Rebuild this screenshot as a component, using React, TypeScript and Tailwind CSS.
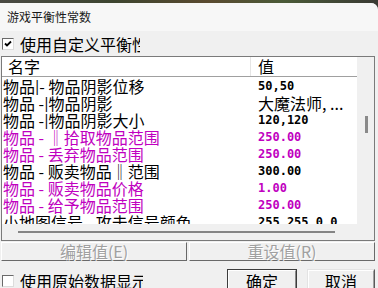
import React from "react";

const rows: { name: string; value: string; magenta?: boolean; cjkValue?: boolean }[] = [
  { name: "物品|- 物品阴影位移", value: "50,50" },
  { name: "物品 -|物品阴影", value: "大魔法师, ...", cjkValue: true },
  { name: "物品 -|物品阴影大小", value: "120,120" },
  { name: "物品 - ‖拾取物品范围", value: "250.00", magenta: true },
  { name: "物品 - 丢弃物品范围", value: "250.00", magenta: true },
  { name: "物品 - 贩卖物品‖范围", value: "300.00" },
  { name: "物品 - 贩卖物品价格", value: "1.00", magenta: true },
  { name: "物品 - 给予物品范围", value: "250.00", magenta: true },
  { name: "小地图信号 - 攻击信号颜色", value: "255,255,0,0" },
];

function CheckBox({ checked }: { checked?: boolean }) {
  return (
    <div className="w-[12px] h-[12px] shrink-0 bg-white border border-t-[#6a6a6a] border-l-[#6a6a6a] border-r-[#dcdcdc] border-b-[#dcdcdc] flex items-center justify-center">
      {checked && (
        <svg width="8" height="8" viewBox="0 0 8 8">
          <path d="M1 3.5 L3 5.5 L7 1.5" stroke="#000" strokeWidth="1.8" fill="none" />
        </svg>
      )}
    </div>
  );
}

export default function App() {
  return (
    <div className="w-[378px] h-[288px] overflow-hidden bg-[linear-gradient(90deg,#4a4a44,#3d4530_30%,#5a4a30_55%,#4a5a38_75%,#3a3a34)] font-['Noto_Sans_CJK_SC',sans-serif] text-black">
      <div className="mt-[3px] h-[285px] bg-[#f0f0f0] rounded-tr-[7px] flex flex-col overflow-hidden">
        {/* title bar */}
        <div className="h-[28px] shrink-0 bg-[#f7f7f7] flex items-center pl-[7px] text-[12px] leading-[14px] text-[#1a1a1a]">
          游戏平衡性常数
        </div>
        {/* top checkbox row */}
        <div className="h-[25px] shrink-0 flex items-center pl-[2px]">
          <CheckBox checked />
          <div className="ml-[6px] w-[120px] overflow-hidden whitespace-nowrap text-[16px] leading-[18px]">
            使用自定义平衡性
          </div>
        </div>
        {/* list */}
        <div className="ml-[1px] w-[374px] h-[185px] shrink-0 border border-[#7a7a7a] flex flex-col bg-[#f0f0f0]">
          <div className="h-[167px] flex">
            <div className="w-[355px] bg-white flex flex-col overflow-hidden">
              <div className="h-[20px] shrink-0 flex border-b border-[#a0a0a0] text-[16px] leading-[19px]">
                <div className="w-[249px] pl-[6px] border-r border-[#e5e5e5]">名字</div>
                <div className="pl-[7px]">值</div>
              </div>
              <div className="pt-[1px]">
                {rows.map((r, i) => (
                  <div
                    key={i}
                    className={`h-[17px] flex whitespace-nowrap ${r.magenta ? "text-[#c000c0]" : "text-black"}`}
                  >
                    <div className="w-[249px] pl-[1px] text-[16px] leading-[17px] overflow-hidden">{r.name}</div>
                    <div
                      className={
                        r.cjkValue
                          ? "pl-[7px] text-[16px] leading-[17px]"
                          : "pl-[7px] font-['DejaVu_Sans_Mono',monospace] font-bold text-[12px] leading-[17px]"
                      }
                    >
                      {r.value}
                    </div>
                  </div>
                ))}
              </div>
            </div>
            <div className="w-[17px] flex flex-col items-center pt-[59px] bg-[#f0f0f0]">
              <div className="w-[3px] h-[17px] bg-[#8a8a8a] ml-[1px]" />
            </div>
          </div>
          <div className="h-[16px] shrink-0 bg-[#f0f0f0] pt-[7px]">
            <div className="ml-[16px] w-[317px] h-[2px] bg-[#858585]" />
          </div>
        </div>
        {/* edit / reset buttons */}
        <div className="mt-[1px] ml-[1px] w-[374px] h-[19px] shrink-0 flex gap-[2px]">
          <div className="w-[186px] h-full border border-t-white border-l-white border-r-[#696969] border-b-[#696969] flex items-center justify-center text-[16px] leading-[17px] text-[#a0a0a0] [text-shadow:1px_1px_0_#fff]">
            编辑值(E)
          </div>
          <div className="flex-1 h-full border border-t-white border-l-white border-r-[#696969] border-b-[#696969] flex items-center justify-center text-[16px] leading-[17px] text-[#a0a0a0] [text-shadow:1px_1px_0_#fff]">
            重设值(R)
          </div>
        </div>
        {/* bottom row */}
        <div className="flex items-start pt-[8px] pl-[2px] pr-[3px]">
          <div className="h-[23px] flex items-center">
            <CheckBox />
            <div className="ml-[6px] w-[123px] overflow-hidden whitespace-nowrap text-[16px] leading-[18px]">
              使用原始数据显示
            </div>
          </div>
          <div className="ml-auto flex gap-[10px]">
            <div className="w-[70px] h-[23px] border border-[#3c3c3c] flex">
              <div className="flex-1 border border-t-white border-l-white border-r-[#8a8a8a] border-b-[#8a8a8a] flex items-center justify-center text-[16px] leading-[18px]">
                确定
              </div>
            </div>
            <div className="w-[68px] h-[23px] border border-t-[#e3e3e3] border-l-[#e3e3e3] border-r-[#5a5a5a] border-b-[#5a5a5a] flex">
              <div className="flex-1 border border-t-white border-l-white border-r-[#a0a0a0] border-b-[#a0a0a0] flex items-center justify-center text-[16px] leading-[18px]">
                取消
              </div>
            </div>
          </div>
        </div>
      </div>
    </div>
  );
}
